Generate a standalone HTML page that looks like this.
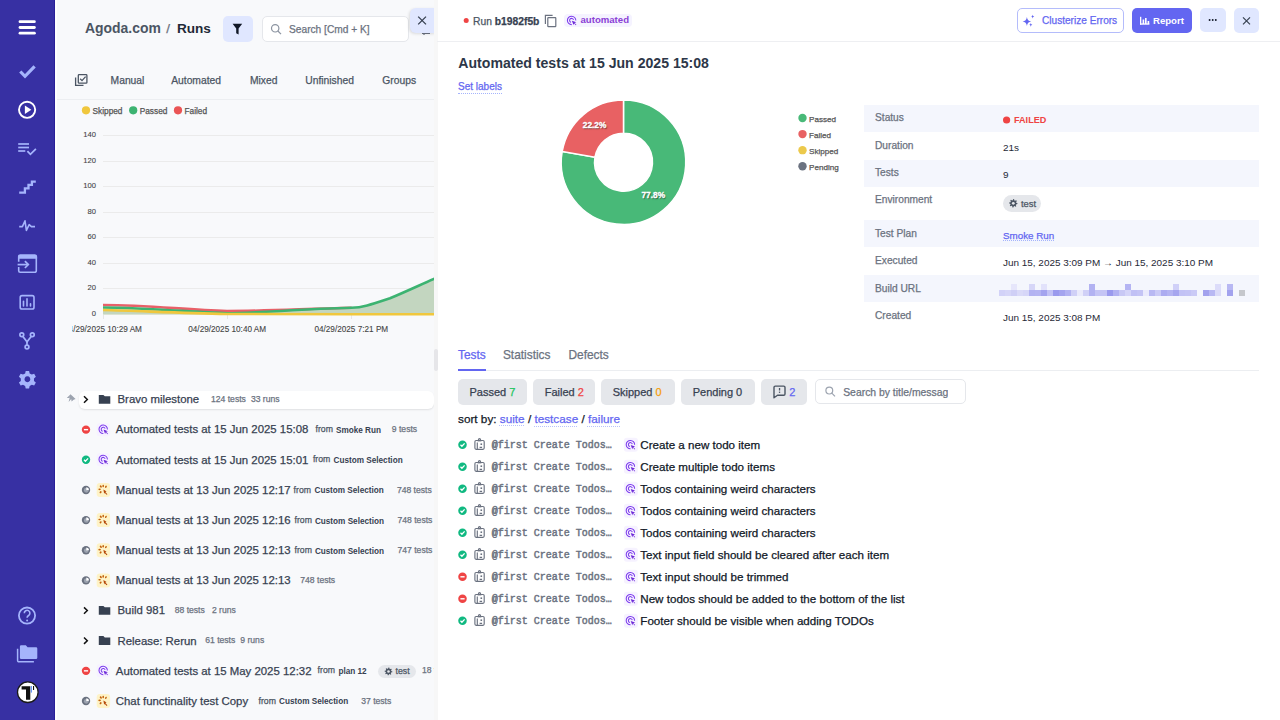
<!DOCTYPE html>
<html><head><meta charset="utf-8">
<style>
*{box-sizing:border-box;margin:0;padding:0}
html,body{width:1280px;height:720px;overflow:hidden;background:#fff;font-family:"Liberation Sans",sans-serif}
.a{position:absolute}
.t{position:absolute;line-height:1;white-space:nowrap;-webkit-text-stroke:0.25px currentColor}
svg{position:absolute;overflow:visible}
#side{position:absolute;left:0;top:0;width:55px;height:720px;background:#3730a3;border-right:1px solid #2a1f98}
#left{position:absolute;left:0;top:0;width:434px;height:720px;background:#f8f9fb;overflow:hidden}
#right{position:absolute;left:0;top:0;width:1280px;height:720px;overflow:hidden}
</style></head><body>
<div id="left">
<div class="a" style="left:55.00px;top:0.00px;width:2.00px;height:720.00px;background:#fff;"></div>
<div class="t" style="left:85.00px;top:22.00px;font-size:13.95px;color:#4b5563;font-weight:bold;-webkit-text-stroke:0;">Agoda.com</div>
<div class="t" style="left:166.30px;top:22.01px;font-size:13.5px;color:#6b7280;">/</div>
<div class="t" style="left:176.90px;top:22.00px;font-size:13.6px;color:#1f2937;font-weight:bold;-webkit-text-stroke:0;">Runs</div>
<div class="a" style="left:223.00px;top:16.00px;width:30.00px;height:26.00px;background:#e0e7ff;border-radius:5px"></div>
<svg style="left:0;top:0" width="1" height="1"><path d="M232.6 23.8 H242.2 L238.6 28.6 V34.6 L236.2 33.2 V28.6 Z" fill="#111827"/></svg>
<div class="a" style="left:262.00px;top:16.00px;width:146.50px;height:26.00px;background:#fff;border:1px solid #e5e7eb;border-radius:5px"></div>
<svg style="left:0;top:0" width="1" height="1"><circle cx="275.2" cy="28.3" r="3.7" fill="none" stroke="#8b93a0" stroke-width="1.2"/><line x1="277.9" y1="31" x2="281" y2="34.1" stroke="#8b93a0" stroke-width="1.2"/></svg>
<div class="t" style="left:289.00px;top:25.01px;font-size:10.2px;color:#6b7280;">Search [Cmd + K]</div>
<svg style="left:0;top:0" width="1" height="1"><path d="M422 33.5 H430 M424 31.5 V35" stroke="#6b7280" stroke-width="1.2"/></svg>
<div class="a" style="left:410.00px;top:8.00px;width:26.00px;height:25.00px;background:#e0e7ff;border-radius:6px 0 0 6px;box-shadow:-1px 1px 3px rgba(0,0,0,0.12)"></div>
<svg style="left:0;top:0" width="1" height="1"><path d="M418.2 16.6 L426 24.4 M426 16.6 L418.2 24.4" stroke="#374151" stroke-width="1.3"/></svg>
<svg style="left:0;top:0" width="1" height="1"><g fill="none" stroke="#4b5563" stroke-width="1.3"><path d="M75.6 77.5 V85.4 H83.5"/><rect x="78.3" y="74.6" width="8.6" height="8.6" rx="0.8"/><polyline points="80.2,78.8 82,80.6 85.6,76.6"/></g></svg>
<div class="t" style="left:110.60px;top:75.61px;font-size:10.3px;color:#4b5563;">Manual</div>
<div class="t" style="left:171.20px;top:75.61px;font-size:10.3px;color:#4b5563;">Automated</div>
<div class="t" style="left:250.00px;top:75.61px;font-size:10.3px;color:#4b5563;">Mixed</div>
<div class="t" style="left:305.30px;top:75.61px;font-size:10.3px;color:#4b5563;">Unfinished</div>
<div class="t" style="left:382.30px;top:75.61px;font-size:10.3px;color:#4b5563;">Groups</div>
<div class="a" style="left:57.00px;top:99.00px;width:377.00px;height:1.00px;background:#eceef1;"></div>
<svg style="left:0;top:0" width="1" height="1"><circle cx="86" cy="110.3" r="4.1" fill="#f0c73d"/></svg>
<div class="t" style="left:92.50px;top:107.31px;font-size:8.3px;color:#555;">Skipped</div>
<svg style="left:0;top:0" width="1" height="1"><circle cx="133.2" cy="110.3" r="4.1" fill="#3cb371"/></svg>
<div class="t" style="left:139.70px;top:107.31px;font-size:8.3px;color:#555;">Passed</div>
<svg style="left:0;top:0" width="1" height="1"><circle cx="178" cy="110.3" r="4.1" fill="#ea5455"/></svg>
<div class="t" style="left:184.50px;top:107.31px;font-size:8.3px;color:#555;">Failed</div>
<div class="t" style="left:0.00px;top:131.20px;font-size:7.6px;color:#444;width:96px;text-align:right;left:0;-webkit-text-stroke:0.1px currentColor">140</div>
<div class="a" style="left:103.00px;top:135.00px;width:332.00px;height:1.00px;background:#ebebeb;"></div>
<div class="t" style="left:0.00px;top:157.20px;font-size:7.6px;color:#444;width:96px;text-align:right;left:0;-webkit-text-stroke:0.1px currentColor">120</div>
<div class="a" style="left:103.00px;top:161.00px;width:332.00px;height:1.00px;background:#ebebeb;"></div>
<div class="t" style="left:0.00px;top:182.20px;font-size:7.6px;color:#444;width:96px;text-align:right;left:0;-webkit-text-stroke:0.1px currentColor">100</div>
<div class="a" style="left:103.00px;top:186.00px;width:332.00px;height:1.00px;background:#ebebeb;"></div>
<div class="t" style="left:0.00px;top:208.20px;font-size:7.6px;color:#444;width:96px;text-align:right;left:0;-webkit-text-stroke:0.1px currentColor">80</div>
<div class="a" style="left:103.00px;top:212.00px;width:332.00px;height:1.00px;background:#ebebeb;"></div>
<div class="t" style="left:0.00px;top:233.20px;font-size:7.6px;color:#444;width:96px;text-align:right;left:0;-webkit-text-stroke:0.1px currentColor">60</div>
<div class="a" style="left:103.00px;top:237.00px;width:332.00px;height:1.00px;background:#ebebeb;"></div>
<div class="t" style="left:0.00px;top:259.20px;font-size:7.6px;color:#444;width:96px;text-align:right;left:0;-webkit-text-stroke:0.1px currentColor">40</div>
<div class="a" style="left:103.00px;top:263.00px;width:332.00px;height:1.00px;background:#ebebeb;"></div>
<div class="t" style="left:0.00px;top:284.20px;font-size:7.6px;color:#444;width:96px;text-align:right;left:0;-webkit-text-stroke:0.1px currentColor">20</div>
<div class="a" style="left:103.00px;top:288.00px;width:332.00px;height:1.00px;background:#ebebeb;"></div>
<div class="t" style="left:0.00px;top:309.70px;font-size:7.6px;color:#444;width:96px;text-align:right;left:0;-webkit-text-stroke:0.1px currentColor">0</div>
<div class="a" style="left:102.50px;top:315.00px;width:1.00px;height:4.00px;background:#e6e6e6;"></div>
<div class="t" style="left:43.00px;top:325.71px;font-size:8.2px;color:#444;width:120px;text-align:center;-webkit-text-stroke:0.1px currentColor">04/29/2025 10:29 AM</div>
<div class="a" style="left:226.70px;top:315.00px;width:1.00px;height:4.00px;background:#e6e6e6;"></div>
<div class="t" style="left:167.20px;top:325.71px;font-size:8.2px;color:#444;width:120px;text-align:center;-webkit-text-stroke:0.1px currentColor">04/29/2025 10:40 AM</div>
<div class="a" style="left:350.80px;top:315.00px;width:1.00px;height:4.00px;background:#e6e6e6;"></div>
<div class="t" style="left:291.30px;top:325.71px;font-size:8.2px;color:#444;width:120px;text-align:center;-webkit-text-stroke:0.1px currentColor">04/29/2025 7:21 PM</div>
<div class="a" style="left:57.00px;top:320.00px;width:15.00px;height:20.00px;background:#f8f9fb;"></div>
<svg style="left:0;top:0" width="1" height="1">
<path d="M103 310 C140 311 180 313 227 314 L351 314.2 L434.6 314.2 V314.5 H103 Z" fill="#e9e1c2" opacity="0.7"/>
<path d="M103 307.5 C150 308 190 312 227 313.3 C260 313 300 309 351.5 307.8 C362 307.6 370 305 390 298.3 C405 292 420 285 434.6 278.6 V314.5 H103 Z" fill="#c3d6c0"/>
<path d="M103 305 C150 305 185 310 227 311 C270 311 300 309 351.7 307.8" fill="none" stroke="#e86068" stroke-width="2.6"/>
<path d="M103 307.5 C150 308 190 312 227 313.3 C260 313 300 309 351.5 307.8 C362 307.6 370 305 390 298.3 C405 292 420 285 434.6 278.6" fill="none" stroke="#3cb371" stroke-width="2.6"/>
<path d="M103 310 C140 311 180 313 227 314 L351 314.2 L434.6 314.2" fill="none" stroke="#f0c73d" stroke-width="2.6"/>
</svg>
<div class="a" style="left:78.80px;top:390.50px;width:355.60px;height:18.50px;background:#fff;border-radius:6px;box-shadow:0 1px 2px rgba(0,0,0,0.10)"></div>
<svg style="left:0;top:0" width="1" height="1"><polyline points="84,396.3 87.3,399.5 84,402.7" fill="none" stroke="#111" stroke-width="1.5"/><path d="M98.8 394.9 H103.4 L104.8 396.3 H110.3 V403.8 H98.8 Z" fill="#374151"/><path d="M70.5 394.3 L75.6 399.1 L73.6 399.7 L71.6 401.5 L71.2 399.1 L68.6 402.1 M70.6 394.3 L69.4 397.9 L66.8 398.1 Z" fill="#9ca3af"/></svg>
<div class="t" style="left:117.50px;top:394.40px;font-size:11.4px;color:#374151;">Bravo milestone</div>
<div class="t" style="left:211.00px;top:394.91px;font-size:8.6px;color:#6b7280;">124 tests</div>
<div class="t" style="left:250.90px;top:394.91px;font-size:8.6px;color:#6b7280;">33 runs</div>
<svg style="left:0;top:0" width="1" height="1"><circle cx="86" cy="429.65" r="4.2" fill="#ef4444"/><rect x="83.9" y="428.95" width="4.2" height="1.4" fill="#fff"/><rect x="96.7" y="423.15" width="13.4" height="13" rx="3" fill="#f6f2ff"/><path d="M107.40 429.40 A4.2 4.2 0 1 0 103.35 433.45" fill="none" stroke="#7c3aed" stroke-width="1.05"/><path d="M105.13 428.73 A2.0 2.0 0 1 0 102.68 431.18" fill="none" stroke="#7c3aed" stroke-width="1.05"/><path d="M103.50 429.55 L107.90 431.15 L106.10 431.85 L108.00 433.65 L107.50 434.15 L105.70 432.25 L105.10 433.95 Z" fill="#6d28d9"/></svg>
<div class="t" style="left:115.80px;top:424.36px;font-size:11.4px;color:#374151;">Automated tests at 15 Jun 2025 15:08</div>
<div class="t" style="left:315.50px;top:425.26px;font-size:8.7px;color:#4b5563;">from</div>
<div class="t" style="left:336.00px;top:427.05px;font-size:8.2px;color:#374151;font-weight:bold;-webkit-text-stroke:0;">Smoke Run</div>
<div class="t" style="left:391.80px;top:425.25px;font-size:8.6px;color:#6b7280;">9 tests</div>
<svg style="left:0;top:0" width="1" height="1"><circle cx="86" cy="459.8" r="4.2" fill="#10b981"/><polyline points="84,459.8 85.4,461.2 88.1,458.40000000000003" fill="none" stroke="#fff" stroke-width="1.3"/><rect x="96.7" y="453.3" width="13.4" height="13" rx="3" fill="#f6f2ff"/><path d="M107.40 459.55 A4.2 4.2 0 1 0 103.35 463.60" fill="none" stroke="#7c3aed" stroke-width="1.05"/><path d="M105.13 458.88 A2.0 2.0 0 1 0 102.68 461.33" fill="none" stroke="#7c3aed" stroke-width="1.05"/><path d="M103.50 459.70 L107.90 461.30 L106.10 462.00 L108.00 463.80 L107.50 464.30 L105.70 462.40 L105.10 464.10 Z" fill="#6d28d9"/></svg>
<div class="t" style="left:115.80px;top:454.51px;font-size:11.4px;color:#374151;">Automated tests at 15 Jun 2025 15:01</div>
<div class="t" style="left:312.90px;top:455.40px;font-size:8.7px;color:#4b5563;">from</div>
<div class="t" style="left:333.50px;top:457.21px;font-size:8.2px;color:#374151;font-weight:bold;-webkit-text-stroke:0;">Custom Selection</div>
<svg style="left:0;top:0" width="1" height="1"><circle cx="86" cy="489.95" r="4.2" fill="#6b7280"/><circle cx="86.3" cy="490.25" r="2.4" fill="#9ca3af"/><path d="M86.3 490.25 L86.3 487.15 A3 3 0 0 1 89.1 489.75 Z" fill="#fff"/><rect x="96.7" y="482.95" width="13.4" height="14" rx="3.2" fill="#fef3c7"/><g fill="#c2610c"><ellipse cx="100.80000000000001" cy="486.55" rx="0.9" ry="1.3" transform="rotate(-35 100.80000000000001 486.55)"/><ellipse cx="103.2" cy="485.95" rx="0.8" ry="1.3"/><ellipse cx="105.9" cy="486.75" rx="0.8" ry="1.2" transform="rotate(30 105.9 486.75)"/><ellipse cx="99.60000000000001" cy="489.34999999999997" rx="1.3" ry="0.8"/><ellipse cx="100.60000000000001" cy="492.15" rx="0.9" ry="1.2" transform="rotate(35 100.60000000000001 492.15)"/></g><path d="M103.4 489.55 L106.60000000000001 491.55 L105.30000000000001 491.95 L107.4 494.15 L106.7 494.84999999999997 L104.60000000000001 492.75 L104.2 493.95 Z" fill="#b54708"/></svg>
<div class="t" style="left:115.80px;top:484.65px;font-size:11.4px;color:#374151;">Manual tests at 13 Jun 2025 12:17</div>
<div class="t" style="left:293.60px;top:485.55px;font-size:8.7px;color:#4b5563;">from</div>
<div class="t" style="left:314.60px;top:487.35px;font-size:8.2px;color:#374151;font-weight:bold;-webkit-text-stroke:0;">Custom Selection</div>
<div class="t" style="left:396.90px;top:485.55px;font-size:8.6px;color:#6b7280;">748 tests</div>
<svg style="left:0;top:0" width="1" height="1"><circle cx="86" cy="520.1" r="4.2" fill="#6b7280"/><circle cx="86.3" cy="520.4" r="2.4" fill="#9ca3af"/><path d="M86.3 520.4 L86.3 517.3000000000001 A3 3 0 0 1 89.1 519.9 Z" fill="#fff"/><rect x="96.7" y="513.1" width="13.4" height="14" rx="3.2" fill="#fef3c7"/><g fill="#c2610c"><ellipse cx="100.80000000000001" cy="516.7" rx="0.9" ry="1.3" transform="rotate(-35 100.80000000000001 516.7)"/><ellipse cx="103.2" cy="516.1" rx="0.8" ry="1.3"/><ellipse cx="105.9" cy="516.9" rx="0.8" ry="1.2" transform="rotate(30 105.9 516.9)"/><ellipse cx="99.60000000000001" cy="519.5" rx="1.3" ry="0.8"/><ellipse cx="100.60000000000001" cy="522.3000000000001" rx="0.9" ry="1.2" transform="rotate(35 100.60000000000001 522.3000000000001)"/></g><path d="M103.4 519.7 L106.60000000000001 521.7 L105.30000000000001 522.1 L107.4 524.3000000000001 L106.7 525.0 L104.60000000000001 522.9 L104.2 524.1 Z" fill="#b54708"/></svg>
<div class="t" style="left:115.80px;top:514.81px;font-size:11.4px;color:#374151;">Manual tests at 13 Jun 2025 12:16</div>
<div class="t" style="left:294.50px;top:515.71px;font-size:8.7px;color:#4b5563;">from</div>
<div class="t" style="left:314.90px;top:517.51px;font-size:8.2px;color:#374151;font-weight:bold;-webkit-text-stroke:0;">Custom Selection</div>
<div class="t" style="left:397.50px;top:515.71px;font-size:8.6px;color:#6b7280;">748 tests</div>
<svg style="left:0;top:0" width="1" height="1"><circle cx="86" cy="550.25" r="4.2" fill="#6b7280"/><circle cx="86.3" cy="550.55" r="2.4" fill="#9ca3af"/><path d="M86.3 550.55 L86.3 547.45 A3 3 0 0 1 89.1 550.05 Z" fill="#fff"/><rect x="96.7" y="543.25" width="13.4" height="14" rx="3.2" fill="#fef3c7"/><g fill="#c2610c"><ellipse cx="100.80000000000001" cy="546.85" rx="0.9" ry="1.3" transform="rotate(-35 100.80000000000001 546.85)"/><ellipse cx="103.2" cy="546.25" rx="0.8" ry="1.3"/><ellipse cx="105.9" cy="547.05" rx="0.8" ry="1.2" transform="rotate(30 105.9 547.05)"/><ellipse cx="99.60000000000001" cy="549.65" rx="1.3" ry="0.8"/><ellipse cx="100.60000000000001" cy="552.45" rx="0.9" ry="1.2" transform="rotate(35 100.60000000000001 552.45)"/></g><path d="M103.4 549.85 L106.60000000000001 551.85 L105.30000000000001 552.25 L107.4 554.45 L106.7 555.15 L104.60000000000001 553.05 L104.2 554.25 Z" fill="#b54708"/></svg>
<div class="t" style="left:115.80px;top:544.95px;font-size:11.4px;color:#374151;">Manual tests at 13 Jun 2025 12:13</div>
<div class="t" style="left:294.50px;top:545.85px;font-size:8.7px;color:#4b5563;">from</div>
<div class="t" style="left:314.90px;top:547.66px;font-size:8.2px;color:#374151;font-weight:bold;-webkit-text-stroke:0;">Custom Selection</div>
<div class="t" style="left:397.50px;top:545.86px;font-size:8.6px;color:#6b7280;">747 tests</div>
<svg style="left:0;top:0" width="1" height="1"><circle cx="86" cy="580.4" r="4.2" fill="#6b7280"/><circle cx="86.3" cy="580.6999999999999" r="2.4" fill="#9ca3af"/><path d="M86.3 580.6999999999999 L86.3 577.6 A3 3 0 0 1 89.1 580.1999999999999 Z" fill="#fff"/><rect x="96.7" y="573.4" width="13.4" height="14" rx="3.2" fill="#fef3c7"/><g fill="#c2610c"><ellipse cx="100.80000000000001" cy="577.0" rx="0.9" ry="1.3" transform="rotate(-35 100.80000000000001 577.0)"/><ellipse cx="103.2" cy="576.4" rx="0.8" ry="1.3"/><ellipse cx="105.9" cy="577.1999999999999" rx="0.8" ry="1.2" transform="rotate(30 105.9 577.1999999999999)"/><ellipse cx="99.60000000000001" cy="579.8" rx="1.3" ry="0.8"/><ellipse cx="100.60000000000001" cy="582.6" rx="0.9" ry="1.2" transform="rotate(35 100.60000000000001 582.6)"/></g><path d="M103.4 580.0 L106.60000000000001 582.0 L105.30000000000001 582.4 L107.4 584.6 L106.7 585.3 L104.60000000000001 583.1999999999999 L104.2 584.4 Z" fill="#b54708"/></svg>
<div class="t" style="left:115.80px;top:575.11px;font-size:11.4px;color:#374151;">Manual tests at 13 Jun 2025 12:13</div>
<div class="t" style="left:300.30px;top:576.00px;font-size:8.6px;color:#6b7280;">748 tests</div>
<svg style="left:0;top:0" width="1" height="1"><polyline points="84,607.3499999999999 87.3,610.55 84,613.75" fill="none" stroke="#111" stroke-width="1.5"/><path d="M98.8 605.9499999999999 H103.4 L104.8 607.3499999999999 H110.3 V614.8499999999999 H98.8 Z" fill="#374151"/></svg>
<div class="t" style="left:117.50px;top:605.45px;font-size:11.4px;color:#374151;">Build 981</div>
<div class="t" style="left:174.70px;top:605.96px;font-size:8.6px;color:#6b7280;">88 tests</div>
<div class="t" style="left:211.90px;top:605.96px;font-size:8.6px;color:#6b7280;">2 runs</div>
<svg style="left:0;top:0" width="1" height="1"><polyline points="84,637.5 87.3,640.7 84,643.9000000000001" fill="none" stroke="#111" stroke-width="1.5"/><path d="M98.8 636.1 H103.4 L104.8 637.5 H110.3 V645.0 H98.8 Z" fill="#374151"/></svg>
<div class="t" style="left:117.50px;top:635.61px;font-size:11.4px;color:#374151;">Release: Rerun</div>
<div class="t" style="left:205.20px;top:636.11px;font-size:8.6px;color:#6b7280;">61 tests</div>
<div class="t" style="left:240.30px;top:636.11px;font-size:8.6px;color:#6b7280;">9 runs</div>
<svg style="left:0;top:0" width="1" height="1"><circle cx="86" cy="670.8499999999999" r="4.2" fill="#ef4444"/><rect x="83.9" y="670.1499999999999" width="4.2" height="1.4" fill="#fff"/><rect x="96.7" y="664.3499999999999" width="13.4" height="13" rx="3" fill="#f6f2ff"/><path d="M107.40 670.60 A4.2 4.2 0 1 0 103.35 674.65" fill="none" stroke="#7c3aed" stroke-width="1.05"/><path d="M105.13 669.93 A2.0 2.0 0 1 0 102.68 672.38" fill="none" stroke="#7c3aed" stroke-width="1.05"/><path d="M103.50 670.75 L107.90 672.35 L106.10 673.05 L108.00 674.85 L107.50 675.35 L105.70 673.45 L105.10 675.15 Z" fill="#6d28d9"/></svg>
<div class="t" style="left:115.80px;top:665.56px;font-size:11.4px;color:#374151;">Automated tests at 15 May 2025 12:32</div>
<div class="t" style="left:317.60px;top:666.46px;font-size:8.7px;color:#4b5563;">from</div>
<div class="t" style="left:338.40px;top:668.26px;font-size:8.2px;color:#374151;font-weight:bold;-webkit-text-stroke:0;">plan 12</div>
<div class="a" style="left:378.00px;top:665.15px;width:38.20px;height:12.60px;background:#e5e7eb;border-radius:7px"></div>
<svg style="left:0;top:0" width="1" height="1"><polygon points="392.40,671.45 392.33,672.21 391.09,672.52 390.83,673.01 391.26,674.21 390.67,674.69 389.57,674.04 389.05,674.20 388.50,675.35 387.74,675.28 387.43,674.04 386.94,673.78 385.74,674.21 385.26,673.62 385.91,672.52 385.75,672.00 384.60,671.45 384.67,670.69 385.91,670.38 386.17,669.89 385.74,668.69 386.33,668.21 387.43,668.86 387.95,668.70 388.50,667.55 389.26,667.62 389.57,668.86 390.06,669.12 391.26,668.69 391.74,669.28 391.09,670.38 391.25,670.90" fill="#4b5563"/><circle cx="388.5" cy="671.4499999999999" r="1.29" fill="#e5e7eb"/></svg>
<div class="t" style="left:395.50px;top:667.16px;font-size:8.8px;color:#4b5563;">test</div>
<div class="t" style="left:422.00px;top:666.46px;font-size:8.6px;color:#6b7280;">18 tests</div>
<svg style="left:0;top:0" width="1" height="1"><circle cx="86" cy="701.0" r="4.2" fill="#6b7280"/><circle cx="86.3" cy="701.3" r="2.4" fill="#9ca3af"/><path d="M86.3 701.3 L86.3 698.2 A3 3 0 0 1 89.1 700.8 Z" fill="#fff"/><rect x="96.7" y="694.0" width="13.4" height="14" rx="3.2" fill="#fef3c7"/><g fill="#c2610c"><ellipse cx="100.80000000000001" cy="697.6" rx="0.9" ry="1.3" transform="rotate(-35 100.80000000000001 697.6)"/><ellipse cx="103.2" cy="697.0" rx="0.8" ry="1.3"/><ellipse cx="105.9" cy="697.8" rx="0.8" ry="1.2" transform="rotate(30 105.9 697.8)"/><ellipse cx="99.60000000000001" cy="700.4" rx="1.3" ry="0.8"/><ellipse cx="100.60000000000001" cy="703.2" rx="0.9" ry="1.2" transform="rotate(35 100.60000000000001 703.2)"/></g><path d="M103.4 700.6 L106.60000000000001 702.6 L105.30000000000001 703.0 L107.4 705.2 L106.7 705.9 L104.60000000000001 703.8 L104.2 705.0 Z" fill="#b54708"/></svg>
<div class="t" style="left:115.80px;top:695.70px;font-size:11.4px;color:#374151;">Chat functinality test Copy</div>
<div class="t" style="left:258.50px;top:696.60px;font-size:8.7px;color:#4b5563;">from</div>
<div class="t" style="left:279.00px;top:698.41px;font-size:8.2px;color:#374151;font-weight:bold;-webkit-text-stroke:0;">Custom Selection</div>
<div class="t" style="left:361.20px;top:696.61px;font-size:8.6px;color:#6b7280;">37 tests</div>
</div>
<div id="right">
<div class="a" style="left:434px;top:0;width:4px;height:720px;background:#f7f7f7"></div><div class="a" style="left:434.4px;top:348.8px;width:3.4px;height:21.8px;background:#e6e6e9;border-radius:2px"></div><div class="a" style="left:438px;top:0;width:842px;height:720px;background:#fff"></div>
<div class="a" style="left:437.00px;top:41.00px;width:843.00px;height:1.00px;background:#eeeff2;"></div>
<svg style="left:0;top:0" width="1" height="1"><circle cx="466.2" cy="20.6" r="2.5" fill="#ef4444"/></svg>
<div class="t" style="left:473.00px;top:16.52px;font-size:10.3px;color:#4b5563;">Run <b style="color:#374151">b1982f5b</b></div>
<svg style="left:0;top:0" width="1" height="1"><g fill="none" stroke="#6b7280" stroke-width="1.2"><path d="M545.4 24 V15.3 H552.6"/><rect x="547.8" y="17.6" width="8" height="9" rx="0.6"/></g></svg>
<div class="a" style="left:563.80px;top:14.00px;width:68.20px;height:13.00px;background:#f5f3ff;border-radius:4px"></div>
<svg style="left:0;top:0" width="1" height="1"><path d="M575.80 20.55 A4.2 4.2 0 1 0 571.75 24.60" fill="none" stroke="#7c3aed" stroke-width="1.05"/><path d="M573.53 19.88 A2.0 2.0 0 1 0 571.08 22.33" fill="none" stroke="#7c3aed" stroke-width="1.05"/><path d="M571.90 20.70 L576.30 22.30 L574.50 23.00 L576.40 24.80 L575.90 25.30 L574.10 23.40 L573.50 25.10 Z" fill="#6d28d9"/></svg>
<div class="t" style="left:580.50px;top:15.21px;font-size:9.6px;color:#8b3fd6;font-weight:bold;-webkit-text-stroke:0;">automated</div>
<div class="a" style="left:1017.00px;top:8.00px;width:106.50px;height:25.30px;background:#fff;border:1px solid #b4bcfb;border-radius:5px"></div>
<svg style="left:0;top:0" width="1" height="1"><g fill="#6366f1"><path d="M1026.90 17.00 Q1027.33 21.05 1031.20 21.50 Q1027.33 21.95 1026.90 26.00 Q1026.47 21.95 1022.60 21.50 Q1026.47 21.05 1026.90 17.00 Z"/><path d="M1032.70 14.80 Q1032.86 16.42 1034.30 16.60 Q1032.86 16.78 1032.70 18.40 Q1032.54 16.78 1031.10 16.60 Q1032.54 16.42 1032.70 14.80 Z"/><path d="M1030.80 22.90 Q1030.96 24.61 1032.40 24.80 Q1030.96 24.99 1030.80 26.70 Q1030.64 24.99 1029.20 24.80 Q1030.64 24.61 1030.80 22.90 Z"/></g></svg>
<div class="t" style="left:1042.00px;top:16.21px;font-size:10.1px;color:#6366f1;">Clusterize Errors</div>
<div class="a" style="left:1132.00px;top:8.00px;width:60.00px;height:25.00px;background:#6366f1;border-radius:5px"></div>
<svg style="left:0;top:0" width="1" height="1"><g fill="#fff"><rect x="1140" y="16.8" width="1.3" height="7.8"/><rect x="1140" y="23.4" width="9.4" height="1.3"/><rect x="1142.6" y="19.5" width="1.6" height="4.5"/><rect x="1145" y="18" width="1.6" height="6"/><rect x="1147.6" y="21" width="1.6" height="3"/></g></svg>
<div class="t" style="left:1153.00px;top:16.10px;font-size:9.6px;color:#fff;font-weight:bold;-webkit-text-stroke:0;">Report</div>
<div class="a" style="left:1200.00px;top:8.40px;width:25.50px;height:23.20px;background:#e0e7ff;border-radius:5px"></div>
<svg style="left:0;top:0" width="1" height="1"><g fill="#111827"><circle cx="1209.6" cy="20" r="0.95"/><circle cx="1212.7" cy="20" r="0.95"/><circle cx="1215.8" cy="20" r="0.95"/></g></svg>
<div class="a" style="left:1234.00px;top:8.40px;width:25.20px;height:24.40px;background:#e0e7ff;border-radius:5px"></div>
<svg style="left:0;top:0" width="1" height="1"><path d="M1243 17.4 L1250 24.4 M1250 17.4 L1243 24.4" stroke="#374151" stroke-width="1.2"/></svg>
<div class="t" style="left:458.30px;top:56.02px;font-size:14.1px;color:#2d3748;font-weight:bold;-webkit-text-stroke:0;">Automated tests at 15 Jun 2025 15:08</div>
<div class="t" style="left:458.00px;top:82.22px;font-size:10.0px;color:#6366f1;">Set labels</div>
<div class="a" style="left:458.00px;top:92.50px;width:44.00px;height:1.00px;background:transparent;border-top:1px dotted #a5b4fc"></div>
<svg style="left:0;top:0" width="1" height="1"><path d="M623.50 100.00 A62.25 62.25 0 1 1 562.20 151.44 L594.94 157.21 A29 29 0 1 0 623.50 133.25 Z" fill="#48b978" stroke="#fff" stroke-width="1.5"/><path d="M562.20 151.44 A62.25 62.25 0 0 1 623.50 100.00 L623.50 133.25 A29 29 0 0 0 594.94 157.21 Z" fill="#e86163" stroke="#fff" stroke-width="1.5"/></svg>
<div class="t" style="left:582.80px;top:120.81px;font-size:8.3px;color:#fff;font-weight:bold;-webkit-text-stroke:0;text-shadow:0.7px 0.8px 1.2px rgba(0,0,0,0.65);-webkit-text-stroke:0.35px #fff">22.2%</div>
<div class="t" style="left:641.50px;top:190.91px;font-size:8.3px;color:#fff;font-weight:bold;-webkit-text-stroke:0;text-shadow:0.7px 0.8px 1.2px rgba(0,0,0,0.65);-webkit-text-stroke:0.35px #fff">77.8%</div>
<svg style="left:0;top:0" width="1" height="1"><circle cx="802.5" cy="118.0" r="4.2" fill="#48b978"/></svg>
<div class="t" style="left:809.00px;top:115.91px;font-size:8.1px;color:#555;">Passed</div>
<svg style="left:0;top:0" width="1" height="1"><circle cx="802.5" cy="134.07999999999998" r="4.2" fill="#e86163"/></svg>
<div class="t" style="left:809.00px;top:131.99px;font-size:8.1px;color:#555;">Failed</div>
<svg style="left:0;top:0" width="1" height="1"><circle cx="802.5" cy="150.16" r="4.2" fill="#ecc94b"/></svg>
<div class="t" style="left:809.00px;top:148.08px;font-size:8.1px;color:#555;">Skipped</div>
<svg style="left:0;top:0" width="1" height="1"><circle cx="802.5" cy="166.24" r="4.2" fill="#6b7280"/></svg>
<div class="t" style="left:809.00px;top:164.16px;font-size:8.1px;color:#555;">Pending</div>
<div class="a" style="left:863.70px;top:104.70px;width:395.10px;height:27.30px;background:#f4f6fd;"></div>
<div class="t" style="left:875.00px;top:113.01px;font-size:10.2px;color:#6b7280;">Status</div>
<div class="t" style="left:875.00px;top:140.70px;font-size:10.2px;color:#6b7280;">Duration</div>
<div class="t" style="left:1003.00px;top:142.80px;font-size:9.95px;color:#1f2937;-webkit-text-stroke:0">21s</div>
<div class="a" style="left:863.70px;top:159.70px;width:395.10px;height:27.00px;background:#f4f6fd;"></div>
<div class="t" style="left:875.00px;top:167.70px;font-size:10.2px;color:#6b7280;">Tests</div>
<div class="t" style="left:1003.00px;top:169.50px;font-size:9.95px;color:#1f2937;-webkit-text-stroke:0">9</div>
<div class="t" style="left:875.00px;top:195.20px;font-size:10.2px;color:#6b7280;">Environment</div>
<div class="a" style="left:863.70px;top:220.00px;width:395.10px;height:27.00px;background:#f4f6fd;"></div>
<div class="t" style="left:875.00px;top:228.51px;font-size:10.2px;color:#6b7280;">Test Plan</div>
<div class="t" style="left:875.00px;top:256.01px;font-size:10.2px;color:#6b7280;">Executed</div>
<div class="t" style="left:1003.00px;top:257.80px;font-size:9.95px;color:#1f2937;-webkit-text-stroke:0">Jun 15, 2025 3:09 PM → Jun 15, 2025 3:10 PM</div>
<div class="a" style="left:863.70px;top:275.00px;width:395.10px;height:27.00px;background:#f4f6fd;"></div>
<div class="t" style="left:875.00px;top:283.51px;font-size:10.2px;color:#6b7280;">Build URL</div>
<div class="t" style="left:875.00px;top:311.01px;font-size:10.2px;color:#6b7280;">Created</div>
<div class="t" style="left:1003.00px;top:312.80px;font-size:9.95px;color:#1f2937;-webkit-text-stroke:0">Jun 15, 2025 3:08 PM</div>
<svg style="left:0;top:0" width="1" height="1"><circle cx="1006.6" cy="120" r="3.6" fill="#ef4444"/></svg>
<div class="t" style="left:1014.00px;top:116.41px;font-size:9.1px;color:#ef4444;font-weight:bold;-webkit-text-stroke:0;">FAILED</div>
<div class="a" style="left:1003.00px;top:195.00px;width:37.80px;height:16.70px;background:#e5e7eb;border-radius:8.5px"></div>
<svg style="left:0;top:0" width="1" height="1"><polygon points="1017.50,203.30 1017.42,204.12 1016.09,204.46 1015.81,204.98 1016.27,206.27 1015.63,206.79 1014.46,206.09 1013.89,206.27 1013.30,207.50 1012.48,207.42 1012.14,206.09 1011.62,205.81 1010.33,206.27 1009.81,205.63 1010.51,204.46 1010.33,203.89 1009.10,203.30 1009.18,202.48 1010.51,202.14 1010.79,201.62 1010.33,200.33 1010.97,199.81 1012.14,200.51 1012.71,200.33 1013.30,199.10 1014.12,199.18 1014.46,200.51 1014.98,200.79 1016.27,200.33 1016.79,200.97 1016.09,202.14 1016.27,202.71" fill="#4b5563"/><circle cx="1013.3" cy="203.3" r="1.39" fill="#e5e7eb"/></svg>
<div class="t" style="left:1021.00px;top:198.62px;font-size:9.4px;color:#4b5563;">test</div>
<div class="t" style="left:1003.00px;top:230.71px;font-size:9.8px;color:#6366f1;">Smoke Run</div>
<div class="a" style="left:1003.00px;top:240.40px;width:51.20px;height:1.00px;background:transparent;border-top:1px dotted #a5b4fc"></div>
<div class="a" style="left:999.00px;top:290.00px;width:6.00px;height:6.00px;background:#d2d2f8;"></div>
<div class="a" style="left:1005.00px;top:290.00px;width:6.00px;height:6.00px;background:#d6d6f8;"></div>
<div class="a" style="left:1011.00px;top:290.00px;width:6.00px;height:6.00px;background:#cfcff6;"></div>
<div class="a" style="left:1017.00px;top:290.00px;width:6.00px;height:6.00px;background:#dadaf8;"></div>
<div class="a" style="left:1023.00px;top:290.00px;width:6.00px;height:6.00px;background:#d6d6f8;"></div>
<div class="a" style="left:1029.00px;top:290.00px;width:6.00px;height:6.00px;background:#b2b2f2;"></div>
<div class="a" style="left:1035.00px;top:290.00px;width:6.00px;height:6.00px;background:#b4b4f2;"></div>
<div class="a" style="left:1041.00px;top:290.00px;width:6.00px;height:6.00px;background:#a4a4ef;"></div>
<div class="a" style="left:1047.00px;top:290.00px;width:6.00px;height:6.00px;background:#c2c2f5;"></div>
<div class="a" style="left:1053.00px;top:290.00px;width:6.00px;height:6.00px;background:#9a9aee;"></div>
<div class="a" style="left:1059.00px;top:290.00px;width:6.00px;height:6.00px;background:#a4a4ef;"></div>
<div class="a" style="left:1065.00px;top:290.00px;width:6.00px;height:6.00px;background:#b2b2f2;"></div>
<div class="a" style="left:1071.00px;top:290.00px;width:6.00px;height:6.00px;background:#d0d0f7;"></div>
<div class="a" style="left:1077.00px;top:290.00px;width:6.00px;height:6.00px;background:#eaeafb;"></div>
<div class="a" style="left:1083.00px;top:290.00px;width:6.00px;height:6.00px;background:#d0d0f7;"></div>
<div class="a" style="left:1089.00px;top:290.00px;width:6.00px;height:6.00px;background:#b2b2f2;"></div>
<div class="a" style="left:1095.00px;top:290.00px;width:6.00px;height:6.00px;background:#c4c4f5;"></div>
<div class="a" style="left:1101.00px;top:290.00px;width:6.00px;height:6.00px;background:#c4c4f5;"></div>
<div class="a" style="left:1107.00px;top:290.00px;width:6.00px;height:6.00px;background:#9a9aee;"></div>
<div class="a" style="left:1113.00px;top:290.00px;width:6.00px;height:6.00px;background:#b2b2f2;"></div>
<div class="a" style="left:1119.00px;top:290.00px;width:6.00px;height:6.00px;background:#c8c8f5;"></div>
<div class="a" style="left:1125.00px;top:290.00px;width:6.00px;height:6.00px;background:#d4d4f8;"></div>
<div class="a" style="left:1131.00px;top:290.00px;width:6.00px;height:6.00px;background:#c0c0f5;"></div>
<div class="a" style="left:1137.00px;top:290.00px;width:6.00px;height:6.00px;background:#c4c4f5;"></div>
<div class="a" style="left:1143.00px;top:290.00px;width:6.00px;height:6.00px;background:#eaeafc;"></div>
<div class="a" style="left:1149.00px;top:290.00px;width:6.00px;height:6.00px;background:#b8b8f3;"></div>
<div class="a" style="left:1155.00px;top:290.00px;width:6.00px;height:6.00px;background:#cacaf6;"></div>
<div class="a" style="left:1161.00px;top:290.00px;width:6.00px;height:6.00px;background:#acacf1;"></div>
<div class="a" style="left:1167.00px;top:290.00px;width:6.00px;height:6.00px;background:#b4b4f2;"></div>
<div class="a" style="left:1173.00px;top:290.00px;width:6.00px;height:6.00px;background:#a6a6ef;"></div>
<div class="a" style="left:1179.00px;top:290.00px;width:6.00px;height:6.00px;background:#c2c2f5;"></div>
<div class="a" style="left:1185.00px;top:290.00px;width:6.00px;height:6.00px;background:#c4c4f5;"></div>
<div class="a" style="left:1191.00px;top:290.00px;width:6.00px;height:6.00px;background:#cacaf6;"></div>
<div class="a" style="left:1197.00px;top:290.00px;width:6.00px;height:6.00px;background:#f4f6fd;"></div>
<div class="a" style="left:1203.00px;top:290.00px;width:6.00px;height:6.00px;background:#a2a2ee;"></div>
<div class="a" style="left:1209.00px;top:290.00px;width:6.00px;height:6.00px;background:#b8b8f3;"></div>
<div class="a" style="left:1215.00px;top:290.00px;width:6.00px;height:6.00px;background:#dadaf8;"></div>
<div class="a" style="left:1221.00px;top:290.00px;width:6.00px;height:6.00px;background:#f4f6fd;"></div>
<div class="a" style="left:1227.00px;top:290.00px;width:6.00px;height:6.00px;background:#a2a2ee;"></div>
<div class="a" style="left:1233.00px;top:290.00px;width:6.00px;height:6.00px;background:#f4f6fd;"></div>
<div class="a" style="left:1239.00px;top:290.00px;width:6.00px;height:6.00px;background:#c5c7cc;"></div>
<div class="a" style="left:1011.00px;top:284.00px;width:6.00px;height:6.00px;background:#e6e6fb;"></div>
<div class="a" style="left:1029.00px;top:284.00px;width:6.00px;height:6.00px;background:#d6d6f8;"></div>
<div class="a" style="left:1041.00px;top:284.00px;width:6.00px;height:6.00px;background:#e2e2fb;"></div>
<div class="a" style="left:1089.00px;top:284.00px;width:6.00px;height:6.00px;background:#b2b2f2;"></div>
<div class="a" style="left:1125.00px;top:284.00px;width:6.00px;height:6.00px;background:#b4b4f3;"></div>
<div class="a" style="left:1173.00px;top:284.00px;width:6.00px;height:6.00px;background:#d0d0f8;"></div>
<div class="a" style="left:1215.00px;top:284.00px;width:6.00px;height:6.00px;background:#dcdcfa;"></div>
<div class="a" style="left:1227.00px;top:284.00px;width:6.00px;height:6.00px;background:#b8b8f3;"></div>
<div class="t" style="left:458.00px;top:350.40px;font-size:11.9px;color:#6366f1;">Tests</div>
<div class="t" style="left:502.90px;top:350.40px;font-size:11.9px;color:#6b7280;">Statistics</div>
<div class="t" style="left:568.50px;top:350.40px;font-size:11.9px;color:#6b7280;">Defects</div>
<div class="a" style="left:458.00px;top:370.00px;width:800.80px;height:1.00px;background:#eceef1;"></div>
<div class="a" style="left:458.00px;top:369.00px;width:28.40px;height:2.00px;background:#6366f1;"></div>
<div class="a" style="left:457.80px;top:379.00px;width:69.00px;height:25.80px;background:#e5e7eb;border-radius:5px"></div>
<div class="t" style="left:469.50px;top:387.30px;font-size:11.0px;color:#374151;">Passed <span style="color:#22c55e">7</span></div>
<div class="a" style="left:533.00px;top:379.00px;width:62.00px;height:25.80px;background:#e5e7eb;border-radius:5px"></div>
<div class="t" style="left:544.70px;top:387.30px;font-size:11.0px;color:#374151;">Failed <span style="color:#ef4444">2</span></div>
<div class="a" style="left:601.00px;top:379.00px;width:74.00px;height:25.80px;background:#e5e7eb;border-radius:5px"></div>
<div class="t" style="left:612.70px;top:387.30px;font-size:11.0px;color:#374151;">Skipped <span style="color:#f59e0b">0</span></div>
<div class="a" style="left:681.00px;top:379.00px;width:74.30px;height:25.80px;background:#e5e7eb;border-radius:5px"></div>
<div class="t" style="left:692.70px;top:387.30px;font-size:11.0px;color:#374151;">Pending 0</div>
<div class="a" style="left:761.30px;top:379.00px;width:45.50px;height:25.80px;background:#e5e7eb;border-radius:5px"></div>
<svg style="left:0;top:0" width="1" height="1"><path d="M775.3 386.1 H783.7 a1.3 1.3 0 0 1 1.3 1.3 V394 a1.3 1.3 0 0 1 -1.3 1.3 H777.5 L774 397.8 V387.4 a1.3 1.3 0 0 1 1.3 -1.3 Z" fill="none" stroke="#4b5563" stroke-width="1.4" stroke-linejoin="round"/><rect x="778.9" y="388" width="1.3" height="2.5" fill="#4b5563"/><rect x="778.9" y="391.6" width="1.3" height="1.3" fill="#4b5563"/></svg>
<div class="t" style="left:789.20px;top:387.30px;font-size:11.0px;color:#6366f1;">2</div>
<div class="a" style="left:815.30px;top:379.20px;width:151.10px;height:25.20px;background:#fff;border:1px solid #e5e7eb;border-radius:5px"></div>
<svg style="left:0;top:0" width="1" height="1"><circle cx="829.3" cy="390.6" r="3.4" fill="none" stroke="#9ca3af" stroke-width="1.2"/><line x1="831.8" y1="393.1" x2="835" y2="396.3" stroke="#9ca3af" stroke-width="1.2"/></svg>
<div class="t" style="left:843.20px;top:387.80px;font-size:10.4px;color:#6b7280;width:105px;overflow:hidden">Search by title/message</div>
<div class="t" style="left:458.00px;top:413.01px;font-size:11.75px;color:#111827;">sort by: <span style="color:#6366f1;text-decoration:underline dotted #b9c2fb;text-underline-offset:1.5px;text-decoration-thickness:1px">suite</span> / <span style="color:#6366f1;text-decoration:underline dotted #b9c2fb;text-underline-offset:2.5px;text-decoration-thickness:1px">testcase</span> / <span style="color:#6366f1;text-decoration:underline dotted #b9c2fb;text-underline-offset:2.5px;text-decoration-thickness:1px">failure</span></div>
<svg style="left:0;top:0" width="1" height="1"><circle cx="462.5" cy="444.8" r="4.25" fill="#10b981"/><polyline points="460.5,444.8 461.9,446.2 464.6,443.40000000000003" fill="none" stroke="#fff" stroke-width="1.3"/><g fill="none" stroke="#6b7280" stroke-width="1.15"><rect x="474.9" y="440.5" width="9.3" height="8.8" rx="1.2"/><circle cx="479.5" cy="439.5" r="1"/><path d="M477.3 442.6 V449.2 M479.6 447.3 H482.1"/></g><rect x="477.6" y="439.90000000000003" width="3.8" height="1.5" fill="#6b7280"/><rect x="480.5" y="443.40000000000003" width="1.6" height="1.6" fill="#6b7280"/><rect x="623.9" y="437.8" width="14" height="14" rx="3" fill="#f6f2ff"/><path d="M634.60 444.75 A4.2 4.2 0 1 0 630.55 448.80" fill="none" stroke="#7c3aed" stroke-width="1.05"/><path d="M632.33 444.08 A2.0 2.0 0 1 0 629.88 446.53" fill="none" stroke="#7c3aed" stroke-width="1.05"/><path d="M630.70 444.90 L635.10 446.50 L633.30 447.20 L635.20 449.00 L634.70 449.50 L632.90 447.60 L632.30 449.30 Z" fill="#6d28d9"/></svg>
<div class="t" style="left:491.80px;top:441.20px;font-size:10px;color:#6b7280;font-family:'Liberation Mono',monospace;-webkit-text-stroke:0.45px #6b7280">@first Create Todos…</div>
<div class="t" style="left:640.30px;top:438.90px;font-size:11.6px;color:#111827;">Create a new todo item</div>
<svg style="left:0;top:0" width="1" height="1"><circle cx="462.5" cy="466.8" r="4.25" fill="#10b981"/><polyline points="460.5,466.8 461.9,468.2 464.6,465.40000000000003" fill="none" stroke="#fff" stroke-width="1.3"/><g fill="none" stroke="#6b7280" stroke-width="1.15"><rect x="474.9" y="462.5" width="9.3" height="8.8" rx="1.2"/><circle cx="479.5" cy="461.5" r="1"/><path d="M477.3 464.6 V471.2 M479.6 469.3 H482.1"/></g><rect x="477.6" y="461.90000000000003" width="3.8" height="1.5" fill="#6b7280"/><rect x="480.5" y="465.40000000000003" width="1.6" height="1.6" fill="#6b7280"/><rect x="623.9" y="459.8" width="14" height="14" rx="3" fill="#f6f2ff"/><path d="M634.60 466.75 A4.2 4.2 0 1 0 630.55 470.80" fill="none" stroke="#7c3aed" stroke-width="1.05"/><path d="M632.33 466.08 A2.0 2.0 0 1 0 629.88 468.53" fill="none" stroke="#7c3aed" stroke-width="1.05"/><path d="M630.70 466.90 L635.10 468.50 L633.30 469.20 L635.20 471.00 L634.70 471.50 L632.90 469.60 L632.30 471.30 Z" fill="#6d28d9"/></svg>
<div class="t" style="left:491.80px;top:463.20px;font-size:10px;color:#6b7280;font-family:'Liberation Mono',monospace;-webkit-text-stroke:0.45px #6b7280">@first Create Todos…</div>
<div class="t" style="left:640.30px;top:460.90px;font-size:11.6px;color:#111827;">Create multiple todo items</div>
<svg style="left:0;top:0" width="1" height="1"><circle cx="462.5" cy="488.8" r="4.25" fill="#10b981"/><polyline points="460.5,488.8 461.9,490.2 464.6,487.40000000000003" fill="none" stroke="#fff" stroke-width="1.3"/><g fill="none" stroke="#6b7280" stroke-width="1.15"><rect x="474.9" y="484.5" width="9.3" height="8.8" rx="1.2"/><circle cx="479.5" cy="483.5" r="1"/><path d="M477.3 486.6 V493.2 M479.6 491.3 H482.1"/></g><rect x="477.6" y="483.90000000000003" width="3.8" height="1.5" fill="#6b7280"/><rect x="480.5" y="487.40000000000003" width="1.6" height="1.6" fill="#6b7280"/><rect x="623.9" y="481.8" width="14" height="14" rx="3" fill="#f6f2ff"/><path d="M634.60 488.75 A4.2 4.2 0 1 0 630.55 492.80" fill="none" stroke="#7c3aed" stroke-width="1.05"/><path d="M632.33 488.08 A2.0 2.0 0 1 0 629.88 490.53" fill="none" stroke="#7c3aed" stroke-width="1.05"/><path d="M630.70 488.90 L635.10 490.50 L633.30 491.20 L635.20 493.00 L634.70 493.50 L632.90 491.60 L632.30 493.30 Z" fill="#6d28d9"/></svg>
<div class="t" style="left:491.80px;top:485.20px;font-size:10px;color:#6b7280;font-family:'Liberation Mono',monospace;-webkit-text-stroke:0.45px #6b7280">@first Create Todos…</div>
<div class="t" style="left:640.30px;top:482.90px;font-size:11.6px;color:#111827;">Todos containing weird characters</div>
<svg style="left:0;top:0" width="1" height="1"><circle cx="462.5" cy="510.8" r="4.25" fill="#10b981"/><polyline points="460.5,510.8 461.9,512.2 464.6,509.40000000000003" fill="none" stroke="#fff" stroke-width="1.3"/><g fill="none" stroke="#6b7280" stroke-width="1.15"><rect x="474.9" y="506.5" width="9.3" height="8.8" rx="1.2"/><circle cx="479.5" cy="505.5" r="1"/><path d="M477.3 508.6 V515.2 M479.6 513.3 H482.1"/></g><rect x="477.6" y="505.90000000000003" width="3.8" height="1.5" fill="#6b7280"/><rect x="480.5" y="509.40000000000003" width="1.6" height="1.6" fill="#6b7280"/><rect x="623.9" y="503.8" width="14" height="14" rx="3" fill="#f6f2ff"/><path d="M634.60 510.75 A4.2 4.2 0 1 0 630.55 514.80" fill="none" stroke="#7c3aed" stroke-width="1.05"/><path d="M632.33 510.08 A2.0 2.0 0 1 0 629.88 512.53" fill="none" stroke="#7c3aed" stroke-width="1.05"/><path d="M630.70 510.90 L635.10 512.50 L633.30 513.20 L635.20 515.00 L634.70 515.50 L632.90 513.60 L632.30 515.30 Z" fill="#6d28d9"/></svg>
<div class="t" style="left:491.80px;top:507.20px;font-size:10px;color:#6b7280;font-family:'Liberation Mono',monospace;-webkit-text-stroke:0.45px #6b7280">@first Create Todos…</div>
<div class="t" style="left:640.30px;top:504.90px;font-size:11.6px;color:#111827;">Todos containing weird characters</div>
<svg style="left:0;top:0" width="1" height="1"><circle cx="462.5" cy="532.8" r="4.25" fill="#10b981"/><polyline points="460.5,532.8 461.9,534.1999999999999 464.6,531.4" fill="none" stroke="#fff" stroke-width="1.3"/><g fill="none" stroke="#6b7280" stroke-width="1.15"><rect x="474.9" y="528.5" width="9.3" height="8.8" rx="1.2"/><circle cx="479.5" cy="527.5" r="1"/><path d="M477.3 530.5999999999999 V537.1999999999999 M479.6 535.3 H482.1"/></g><rect x="477.6" y="527.9" width="3.8" height="1.5" fill="#6b7280"/><rect x="480.5" y="531.4" width="1.6" height="1.6" fill="#6b7280"/><rect x="623.9" y="525.8" width="14" height="14" rx="3" fill="#f6f2ff"/><path d="M634.60 532.75 A4.2 4.2 0 1 0 630.55 536.80" fill="none" stroke="#7c3aed" stroke-width="1.05"/><path d="M632.33 532.08 A2.0 2.0 0 1 0 629.88 534.53" fill="none" stroke="#7c3aed" stroke-width="1.05"/><path d="M630.70 532.90 L635.10 534.50 L633.30 535.20 L635.20 537.00 L634.70 537.50 L632.90 535.60 L632.30 537.30 Z" fill="#6d28d9"/></svg>
<div class="t" style="left:491.80px;top:529.22px;font-size:10px;color:#6b7280;font-family:'Liberation Mono',monospace;-webkit-text-stroke:0.45px #6b7280">@first Create Todos…</div>
<div class="t" style="left:640.30px;top:526.90px;font-size:11.6px;color:#111827;">Todos containing weird characters</div>
<svg style="left:0;top:0" width="1" height="1"><circle cx="462.5" cy="554.8" r="4.25" fill="#10b981"/><polyline points="460.5,554.8 461.9,556.1999999999999 464.6,553.4" fill="none" stroke="#fff" stroke-width="1.3"/><g fill="none" stroke="#6b7280" stroke-width="1.15"><rect x="474.9" y="550.5" width="9.3" height="8.8" rx="1.2"/><circle cx="479.5" cy="549.5" r="1"/><path d="M477.3 552.5999999999999 V559.1999999999999 M479.6 557.3 H482.1"/></g><rect x="477.6" y="549.9" width="3.8" height="1.5" fill="#6b7280"/><rect x="480.5" y="553.4" width="1.6" height="1.6" fill="#6b7280"/><rect x="623.9" y="547.8" width="14" height="14" rx="3" fill="#f6f2ff"/><path d="M634.60 554.75 A4.2 4.2 0 1 0 630.55 558.80" fill="none" stroke="#7c3aed" stroke-width="1.05"/><path d="M632.33 554.08 A2.0 2.0 0 1 0 629.88 556.53" fill="none" stroke="#7c3aed" stroke-width="1.05"/><path d="M630.70 554.90 L635.10 556.50 L633.30 557.20 L635.20 559.00 L634.70 559.50 L632.90 557.60 L632.30 559.30 Z" fill="#6d28d9"/></svg>
<div class="t" style="left:491.80px;top:551.22px;font-size:10px;color:#6b7280;font-family:'Liberation Mono',monospace;-webkit-text-stroke:0.45px #6b7280">@first Create Todos…</div>
<div class="t" style="left:640.30px;top:548.90px;font-size:11.6px;color:#111827;">Text input field should be cleared after each item</div>
<svg style="left:0;top:0" width="1" height="1"><circle cx="462.5" cy="576.8" r="4.25" fill="#ef4444"/><rect x="460.4" y="576.0999999999999" width="4.2" height="1.4" fill="#fff"/><g fill="none" stroke="#6b7280" stroke-width="1.15"><rect x="474.9" y="572.5" width="9.3" height="8.8" rx="1.2"/><circle cx="479.5" cy="571.5" r="1"/><path d="M477.3 574.5999999999999 V581.1999999999999 M479.6 579.3 H482.1"/></g><rect x="477.6" y="571.9" width="3.8" height="1.5" fill="#6b7280"/><rect x="480.5" y="575.4" width="1.6" height="1.6" fill="#6b7280"/><rect x="623.9" y="569.8" width="14" height="14" rx="3" fill="#f6f2ff"/><path d="M634.60 576.75 A4.2 4.2 0 1 0 630.55 580.80" fill="none" stroke="#7c3aed" stroke-width="1.05"/><path d="M632.33 576.08 A2.0 2.0 0 1 0 629.88 578.53" fill="none" stroke="#7c3aed" stroke-width="1.05"/><path d="M630.70 576.90 L635.10 578.50 L633.30 579.20 L635.20 581.00 L634.70 581.50 L632.90 579.60 L632.30 581.30 Z" fill="#6d28d9"/></svg>
<div class="t" style="left:491.80px;top:573.22px;font-size:10px;color:#6b7280;font-family:'Liberation Mono',monospace;-webkit-text-stroke:0.45px #6b7280">@first Create Todos…</div>
<div class="t" style="left:640.30px;top:570.90px;font-size:11.6px;color:#111827;">Text input should be trimmed</div>
<svg style="left:0;top:0" width="1" height="1"><circle cx="462.5" cy="598.8" r="4.25" fill="#ef4444"/><rect x="460.4" y="598.0999999999999" width="4.2" height="1.4" fill="#fff"/><g fill="none" stroke="#6b7280" stroke-width="1.15"><rect x="474.9" y="594.5" width="9.3" height="8.8" rx="1.2"/><circle cx="479.5" cy="593.5" r="1"/><path d="M477.3 596.5999999999999 V603.1999999999999 M479.6 601.3 H482.1"/></g><rect x="477.6" y="593.9" width="3.8" height="1.5" fill="#6b7280"/><rect x="480.5" y="597.4" width="1.6" height="1.6" fill="#6b7280"/><rect x="623.9" y="591.8" width="14" height="14" rx="3" fill="#f6f2ff"/><path d="M634.60 598.75 A4.2 4.2 0 1 0 630.55 602.80" fill="none" stroke="#7c3aed" stroke-width="1.05"/><path d="M632.33 598.08 A2.0 2.0 0 1 0 629.88 600.53" fill="none" stroke="#7c3aed" stroke-width="1.05"/><path d="M630.70 598.90 L635.10 600.50 L633.30 601.20 L635.20 603.00 L634.70 603.50 L632.90 601.60 L632.30 603.30 Z" fill="#6d28d9"/></svg>
<div class="t" style="left:491.80px;top:595.22px;font-size:10px;color:#6b7280;font-family:'Liberation Mono',monospace;-webkit-text-stroke:0.45px #6b7280">@first Create Todos…</div>
<div class="t" style="left:640.30px;top:592.90px;font-size:11.6px;color:#111827;">New todos should be added to the bottom of the list</div>
<svg style="left:0;top:0" width="1" height="1"><circle cx="462.5" cy="620.8" r="4.25" fill="#10b981"/><polyline points="460.5,620.8 461.9,622.1999999999999 464.6,619.4" fill="none" stroke="#fff" stroke-width="1.3"/><g fill="none" stroke="#6b7280" stroke-width="1.15"><rect x="474.9" y="616.5" width="9.3" height="8.8" rx="1.2"/><circle cx="479.5" cy="615.5" r="1"/><path d="M477.3 618.5999999999999 V625.1999999999999 M479.6 623.3 H482.1"/></g><rect x="477.6" y="615.9" width="3.8" height="1.5" fill="#6b7280"/><rect x="480.5" y="619.4" width="1.6" height="1.6" fill="#6b7280"/><rect x="623.9" y="613.8" width="14" height="14" rx="3" fill="#f6f2ff"/><path d="M634.60 620.75 A4.2 4.2 0 1 0 630.55 624.80" fill="none" stroke="#7c3aed" stroke-width="1.05"/><path d="M632.33 620.08 A2.0 2.0 0 1 0 629.88 622.53" fill="none" stroke="#7c3aed" stroke-width="1.05"/><path d="M630.70 620.90 L635.10 622.50 L633.30 623.20 L635.20 625.00 L634.70 625.50 L632.90 623.60 L632.30 625.30 Z" fill="#6d28d9"/></svg>
<div class="t" style="left:491.80px;top:617.22px;font-size:10px;color:#6b7280;font-family:'Liberation Mono',monospace;-webkit-text-stroke:0.45px #6b7280">@first Create Todos…</div>
<div class="t" style="left:640.30px;top:614.90px;font-size:11.6px;color:#111827;">Footer should be visible when adding TODOs</div>
</div>
<div id="side">
<svg width="55" height="720" viewBox="0 0 55 720" style="left:0;top:0">
 <g stroke="#fff" stroke-width="2.8" stroke-linecap="round">
  <line x1="20" y1="21.7" x2="34.4" y2="21.7"/><line x1="20" y1="27.5" x2="34.4" y2="27.5"/><line x1="20" y1="33.2" x2="34.4" y2="33.2"/>
 </g>
 <polyline points="20.3,71.5 25,76.3 34.6,66.3" fill="none" stroke="#a5b4fc" stroke-width="3.2"/>
 <circle cx="27.1" cy="109.8" r="8.1" fill="none" stroke="#fff" stroke-width="1.9"/>
 <path d="M24.9 105.6 L31.3 109.8 L24.9 114 Z" fill="#fff"/>
 <g stroke="#a5b4fc" stroke-width="1.7" fill="none">
  <line x1="18.2" y1="144" x2="29" y2="144"/><line x1="18.2" y1="147.5" x2="29" y2="147.5"/><line x1="18.2" y1="151" x2="25.3" y2="151"/>
  <polyline points="27.4,151.2 30.4,154.3 35.9,148.9" stroke-width="1.8"/>
 </g>
 <path d="M19.2 192.6 H24.9 V188.3 H28.5 V184.8 H31.9 V181.7 H35.8" fill="none" stroke="#a5b4fc" stroke-width="2.3" stroke-linejoin="miter"/>
 <polyline points="19.2,226.6 22.4,226.6 25,220.8 26.4,230.4 29.2,224.6 31.4,226.6 35,226.6" fill="none" stroke="#a5b4fc" stroke-width="1.6" stroke-linejoin="round"/>
 <g fill="none" stroke="#a5b4fc" stroke-width="1.6">
  <path d="M18.7 261.7 V256.6 a1.5 1.5 0 0 1 1.5 -1.5 H34.8 a1.5 1.5 0 0 1 1.5 1.5 V270.8 a1.5 1.5 0 0 1 -1.5 1.5 H20.2 a1.5 1.5 0 0 1 -1.5 -1.5 V267.1"/>
  <line x1="17.6" y1="264.6" x2="28.2" y2="264.6" stroke-width="1.7"/>
  <polyline points="24.9,261.2 28.3,264.6 24.9,268" stroke-width="1.7"/>
 </g>
 <path d="M18 258.8 V256.6 a1.6 1.6 0 0 1 1.6 -1.6 H35.5 a1.6 1.6 0 0 1 1.6 1.6 V258.8 Z" fill="#a5b4fc"/>
 <rect x="20.2" y="295.6" width="13.8" height="13.4" rx="1.8" fill="none" stroke="#a5b4fc" stroke-width="1.6"/>
 <g stroke="#a5b4fc" stroke-width="1.6" stroke-linecap="round"><line x1="23.5" y1="301.4" x2="23.5" y2="306"/><line x1="27" y1="298.9" x2="27" y2="306"/><line x1="30.5" y1="303.9" x2="30.5" y2="306"/></g>
 <g fill="none" stroke="#a5b4fc" stroke-width="1.7">
  <circle cx="21.8" cy="334.8" r="1.9"/><circle cx="32.3" cy="334.8" r="1.9"/><circle cx="27" cy="347" r="1.9"/>
  <polyline points="22.9,336.5 27,341.8 31.2,336.5"/><line x1="27" y1="341.5" x2="27" y2="345.1"/>
 </g>
 <path transform="translate(27.4 379.4) scale(0.94) translate(-27.4 -379.9)" fill="#a5b4fc" fill-rule="evenodd" d="M25.6 370.9 h3.6 l0.6 2.6 l2.3 1.3 l2.5 -0.8 l1.8 3.1 l-2 1.8 v2.6 l2 1.8 l-1.8 3.1 l-2.5 -0.8 l-2.3 1.3 l-0.6 2.6 h-3.6 l-0.6 -2.6 l-2.3 -1.3 l-2.5 0.8 l-1.8 -3.1 l2 -1.8 v-2.6 l-2 -1.8 l1.8 -3.1 l2.5 0.8 l2.3 -1.3 Z M27.4 376.6 a3.1 3.1 0 1 0 0.01 0 Z"/>
 <circle cx="27" cy="615.6" r="8.1" fill="none" stroke="#a5b4fc" stroke-width="1.8"/>
 <path d="M24.3 613.2 a2.8 2.8 0 1 1 4.3 2.3 c-1 0.6 -1.5 1.1 -1.5 2.3" fill="none" stroke="#a5b4fc" stroke-width="1.6"/>
 <circle cx="27.1" cy="620.5" r="1" fill="#a5b4fc"/>
 <path d="M17.6 648.8 V660.6 a1.2 1.2 0 0 0 1.2 1.2 H33.9" fill="none" stroke="#a5b4fc" stroke-width="1.5"/>
 <path d="M21.2 645.3 H25.8 L27.6 647.2 H36 a1.3 1.3 0 0 1 1.3 1.3 V657.8 a1.3 1.3 0 0 1 -1.3 1.3 H21.2 a1.3 1.3 0 0 1 -1.3 -1.3 V646.6 a1.3 1.3 0 0 1 1.3 -1.3 Z" fill="#a5b4fc"/>
 <circle cx="27.8" cy="692.2" r="10.3" fill="#fff" stroke="#1a1a1a" stroke-width="1.3"/>
 <path d="M21.6 686.2 H30.3 V699.8 H26 V689.5 H21.6 Z" fill="#111"/><rect x="30.8" y="686" width="1.1" height="6.6" fill="#5b8cf5"/><rect x="33" y="686" width="1.1" height="4" fill="#111"/>
</svg>
</div>
</body></html>
